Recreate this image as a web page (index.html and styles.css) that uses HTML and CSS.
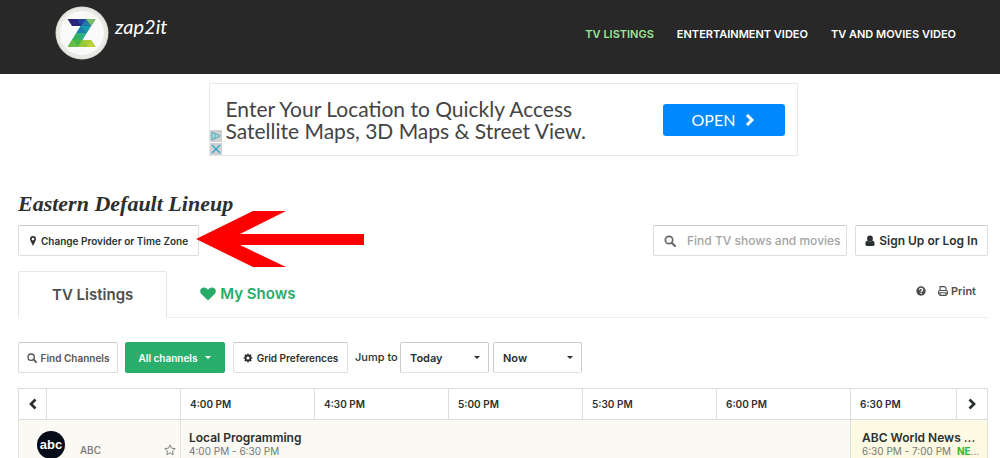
FILE: index.html
```html
<!DOCTYPE html>
<html lang="en">
<head>
<meta charset="utf-8">
<meta name="viewport" content="width=device-width, initial-scale=1">
<title>Zap2it TV Listings</title>
<link rel="stylesheet" href="styles.css">
</head>
<body>
<header class="site-header">
  <a class="brand" href="#">
    <svg class="brand-mark" viewBox="0 0 54 54" aria-hidden="true">
      <clipPath id="z"><path d="M12.500 13h28l-13 21H36l4.500 7h-28l13-21H17z"/></clipPath>
      <circle cx="27" cy="27" r="26.500" fill="#d9d7d1"/>
      <circle cx="27" cy="27" r="25.500" fill="#e9e8e5"/>
      <circle cx="27" cy="27" r="22" fill="#fafafa"/>
      <g clip-path="url(#z)">
        <path d="M12 13h30v7H12z" fill="#28247c"/>
        <path d="M22 13h9l-5 7z" fill="#24459b"/>
        <path d="M31 13l5 7H26z" fill="#2279ad"/>
        <path d="M31 13h10l-5 7z" fill="#76c06a"/>
        <path d="M12 20h30v7H12z" fill="#179aa8"/>
        <path d="M26 20l5 7h-9z" fill="#1f7fae"/>
        <path d="M12 27h30v7H12z" fill="#2fae83"/>
        <path d="M22 27l5 7h-9z" fill="#39b15b"/>
        <path d="M12 34h30v7H12z" fill="#4ab749"/>
        <path d="M18 34l5 7H13z" fill="#6abf45"/>
        <path d="M27 34l5 7h-9z" fill="#94c83d"/>
        <path d="M27 34h15v7H32z" fill="#a9cb38"/>
        <path d="M36 34l5 7h-9z" fill="#bdd234"/>
      </g>
    </svg>
    <span class="brand-name">zap2it</span>
  </a>
  <nav class="main-nav">
    <a class="nav-link nav-link-current" href="#">TV LISTINGS</a>
    <a class="nav-link" href="#">ENTERTAINMENT VIDEO</a>
    <a class="nav-link" href="#">TV AND MOVIES VIDEO</a>
  </nav>
</header>

<main class="page">
  <aside class="ad">
    <p class="ad-text">Enter Your Location to Quickly Access Satellite Maps, 3D Maps &amp; Street View.</p>
    <a class="ad-open" href="#">OPEN
      <svg class="ad-chevron" viewBox="0 0 10 14" aria-hidden="true"><path d="M2 2l5 5-5 5" fill="none" stroke="#fff" stroke-width="3"/></svg>
    </a>
    <div class="ad-badges">
      <button class="ad-badge" aria-label="Ad choices"><svg viewBox="0 0 12 12"><path d="M2 2v8l8-4zM5 4v4" fill="none" stroke="#35b3c8"/></svg></button>
      <button class="ad-badge" aria-label="Close ad"><svg viewBox="0 0 12 12"><path d="M2 2l8 8M10 2l-8 8" fill="none" stroke="#2babc4" stroke-width="1.3"/></svg></button>
    </div>
  </aside>

  <h1 class="lineup">Eastern Default Lineup</h1>

  <div class="toolbar">
    <div class="provider">
      <button class="btn btn-provider">
        <svg class="icon-pin" viewBox="0 0 8 12" aria-hidden="true"><path fill-rule="evenodd" d="M4 1a3 3 0 0 1 3 3c0 1-.3 1.600-.7 2.300L4 11 1.700 6.300C1.300 5.600 1 5 1 4a3 3 0 0 1 3-3zm0 1.700a1.400 1.400 0 1 0 0 2.800 1.400 1.400 0 0 0 0-2.800z" fill="#2b302f"/></svg>
        Change Provider or Time Zone
      </button>
      <svg class="arrow" viewBox="0 0 168 56" aria-hidden="true"><path d="M0 28L57 0H90L44 23H168V34H44L90 56H57z" fill="#fe0000"/></svg>
    </div>
    <div class="account">
      <label class="search">
        <svg class="icon-search" viewBox="0 0 12 12" aria-hidden="true"><circle cx="5" cy="5" r="3.700" fill="none" stroke="currentColor" stroke-width="1.700"/><path d="M7.700 7.700L11 11" stroke="currentColor" stroke-width="2" stroke-linecap="round"/></svg>
        <input class="search-input" type="text" placeholder="Find TV shows and movies" aria-label="Find TV shows and movies">
      </label>
      <button class="btn btn-signin">
        <svg class="icon-user" viewBox="0 0 10 12" aria-hidden="true"><circle cx="5" cy="3.500" r="2.900" fill="currentColor"/><path d="M2.300 5.500C.8 6 .4 7.500.4 9.300.4 10.400 1 11 2 11h6c1 0 1.600-.6 1.600-1.700 0-1.800-.4-3.300-1.900-3.800-1.500 1.400-3.900 1.400-5.400 0z" fill="currentColor"/></svg>
        Sign Up or Log In
      </button>
    </div>
  </div>

  <div class="tabs">
    <a class="tab tab-current" href="#">TV Listings</a>
    <a class="tab tab-shows" href="#">
      <svg class="icon-heart" viewBox="0 0 16 14" aria-hidden="true"><path d="M8 13.500L1.800 7.500C-1.500 4.200.6.500 4 .5c1.900 0 3.100 1.100 4 2.200C8.900 1.600 10.100.5 12 .5c3.400 0 5.500 3.700 2.200 7z" fill="currentColor"/></svg>
      My Shows
    </a>
    <div class="tools">
      <a class="tool" href="#" aria-label="Help"><svg class="icon-tool" viewBox="0 0 10 10"><circle cx="5" cy="5" r="4.700" fill="currentColor"/><path d="M3.400 3.700C3.500 2.700 4.100 2.300 5 2.300c1 0 1.700.6 1.700 1.400C6.700 4.800 5.200 4.700 5.200 6" fill="none" stroke="#fff" stroke-width="1.300"/><path d="M4.500 6.800h1.400V8H4.500z" fill="#fff"/></svg></a>
      <a class="tool" href="#"><svg class="icon-tool" viewBox="0 0 10 10" aria-hidden="true"><path d="M2 5V.6h4.500L8 2v3M2 8H.6V5.500q0-1 1-1h6.800q1 0 1 1V8H8M2 6.700h6v2.700H2z" fill="none" stroke="currentColor" stroke-width="1.100"/></svg>Print</a>
    </div>
  </div>

  <div class="filters">
    <button class="btn btn-find">
      <svg class="icon-find" viewBox="0 0 12 12" aria-hidden="true"><circle cx="5" cy="5" r="3.800" fill="none" stroke="currentColor" stroke-width="1.600"/><path d="M7.700 7.700L11 11" stroke="currentColor" stroke-width="2" stroke-linecap="round"/></svg>
      Find Channels
    </button>
    <button class="btn btn-all">All channels <span class="caret"></span></button>
    <button class="btn btn-prefs">
      <svg class="icon-find" viewBox="0 0 12 12" aria-hidden="true"><circle cx="6" cy="6" r="3" fill="none" stroke="currentColor" stroke-width="2.200"/><path d="M6 .8v2M6 9.200v2M.8 6h2M9.200 6h2M2.300 2.300l1.400 1.400M8.300 8.300l1.400 1.400M9.700 2.300L8.300 3.700M3.700 8.300L2.300 9.700" stroke="currentColor" stroke-width="2"/></svg>
      Grid Preferences
    </button>
    <label class="jump" for="day">Jump to</label>
    <div class="pick"><select class="pick-select" id="day"><option>Today</option></select><span class="caret pick-caret"></span></div>
    <div class="pick"><select class="pick-select" aria-label="Time"><option>Now</option></select><span class="caret pick-caret"></span></div>
  </div>

  <table class="grid">
    <colgroup><col class="col-prev"><col class="col-slot"><col class="col-slot"><col class="col-slot"><col class="col-slot"><col class="col-slot"><col class="col-slot"><col><col class="col-next"></colgroup>
    <thead>
      <tr>
        <th class="step"><button class="step-btn" aria-label="Earlier"><svg class="icon-step" viewBox="0 0 10 12"><path d="M7.500 1.500L3 6l4.500 4.500" fill="none" stroke="currentColor" stroke-width="2.700"/></svg></button></th>
        <th></th>
        <th>4:00 PM</th><th>4:30 PM</th><th>5:00 PM</th><th>5:30 PM</th><th>6:00 PM</th><th>6:30 PM</th>
        <th class="step"><button class="step-btn" aria-label="Later"><svg class="icon-step" viewBox="0 0 10 12"><path d="M2.500 1.500L7 6l-4.500 4.500" fill="none" stroke="currentColor" stroke-width="2.700"/></svg></button></th>
      </tr>
    </thead>
    <tbody>
      <tr>
        <td class="channel" colspan="2">
          <div class="channel-row">
            <svg class="channel-logo" viewBox="0 0 28 28" role="img" aria-label="abc"><circle cx="14" cy="14" r="14" fill="#070d18"/><text class="logo-text" x="14" y="18" text-anchor="middle">abc</text></svg>
            <span class="channel-name">ABC</span>
            <button class="star" aria-label="Add ABC to favorites"><svg viewBox="0 0 12 12"><path d="M6 .9l1.500 3.300 3.700.4-2.700 2.500.7 3.600L6 8.900l-3.200 1.800.7-3.600L.8 4.600l3.700-.4z" fill="none" stroke="#777" stroke-width=".9"/></svg></button>
          </div>
        </td>
        <td class="show" colspan="5">
          <a class="show-title" href="#">Local Programming</a>
          <div class="show-time">4:00 PM - 6:30 PM</div>
        </td>
        <td class="show show-news" colspan="2">
          <a class="show-title" href="#">ABC World News ...</a>
          <div class="show-time">6:30 PM - 7:00 PM <span class="new"><b class="new-tag">NE</b>...</span></div>
        </td>
      </tr>
    </tbody>
  </table>
</main>
</body>
</html>
```
FILE: styles.css
```css
* { box-sizing: border-box; }

body {
  margin: 0;
  background: #fff;
  color: #2b302f;
  font: 600 11px/16px Inter, "Open Sans", sans-serif;
}

a { color: inherit; text-decoration: none; }
button, input, select { margin: 0; font: inherit; color: inherit; }
button { cursor: pointer; }
svg { display: block; flex: none; }

.site-header {
  display: flex;
  align-items: flex-start;
  justify-content: space-between;
  min-height: 74px;
  padding: 6px 44px 0 55px;
  background: #282828;
}
.brand { display: flex; gap: 6px; color: #fff; }
.brand-mark { width: 54px; height: 54px; }
.brand-name { padding-top: 8px; font: italic 400 20px/24px Lato, sans-serif; }
.main-nav { display: flex; gap: 23px; padding-top: 20px; }
.nav-link { color: #fff; }
.nav-link-current { color: #9be69b; }

.page { padding: 9px 12px 0 18px; }

.ad {
  position: relative;
  display: flex;
  align-items: center;
  justify-content: space-between;
  max-width: 589px;
  min-height: 73px;
  margin: 0 auto;
  padding: 0 12px 0 16px;
  border: 1px solid #e8e8e8;
}
.ad-text {
  max-width: 380px;
  margin: 0;
  color: #444;
  font: 400 21px/22px Lato, sans-serif;
}
.ad-open {
  display: flex;
  align-items: center;
  justify-content: center;
  gap: 10px;
  width: 122px;
  height: 32px;
  border-radius: 3px;
  background: #0088ff;
  color: #fff;
  font: 400 16px/32px Lato, sans-serif;
}
.ad-chevron { width: 10px; height: 14px; }
.ad-badges {
  position: absolute;
  left: 0;
  bottom: 0;
  display: grid;
  gap: 1px;
}
.ad-badge { width: 12px; height: 12px; padding: 0; border: 0; background: #d0d0d0; }

.lineup {
  margin: 36px 0 9px;
  font: italic 700 22px/24px "Liberation Serif", serif;
}

.toolbar { display: flex; justify-content: space-between; }
.provider { position: relative; }
.arrow {
  position: absolute;
  left: 178px;
  top: -14px;
  width: 168px;
  height: 56px;
}
.account { display: flex; gap: 8px; }

.btn {
  display: flex;
  align-items: center;
  justify-content: center;
  gap: 4px;
  height: 31px;
  padding: 0;
  border: 1px solid #ddd;
  border-top-color: #c8c8c8;
  border-radius: 2px;
  background: #fff;
  font-size: 10px;
  white-space: nowrap;
}
.btn-provider { width: 181px; }
.btn-signin { width: 133px; font-size: 12px; }
.icon-pin { width: 8px; height: 12px; }
.icon-user { width: 10px; height: 12px; }

.search {
  display: flex;
  align-items: center;
  gap: 11px;
  width: 194px;
  height: 31px;
  padding: 0 5px 0 10px;
  border: 1px solid #ddd;
  border-top-color: #c8c8c8;
  border-radius: 2px;
  color: #666;
}
.icon-search { width: 12px; height: 12px; }
.search-input {
  flex: 1;
  min-width: 0;
  padding: 0;
  border: 0;
  outline: 0;
  background: none;
  font-size: 12px;
  font-weight: 500;
}
.search-input::placeholder { color: #a4a4a4; opacity: 1; }

.tabs {
  display: flex;
  height: 47px;
  margin-top: 15px;
  border-bottom: 1px solid #ececec;
  color: #4c4f4f;
}
.tab {
  display: flex;
  align-items: center;
  gap: 4px;
  padding: 0 33px;
  font-size: 15px;
}
.tab-current {
  height: 47px;
  border: 1px solid #e6e6e6;
  border-bottom-color: #fff;
  border-radius: 2px 2px 0 0;
}
.tab-shows { color: #27ab68; }
.icon-heart { width: 16px; height: 14px; }
.tools {
  display: flex;
  align-items: flex-start;
  gap: 12px;
  margin-left: auto;
  padding: 12px 12px 0 0;
}
.tool { display: flex; align-items: center; gap: 3px; min-height: 16px; }
.icon-tool { width: 10px; height: 10px; }

.filters { display: flex; margin: 24px 0 15px; }
.icon-find { width: 10px; height: 10px; }
.btn-find { width: 100px; margin-right: 7px; color: #555; }
.btn-all {
  gap: 8px;
  width: 100px;
  margin-right: 8px;
  border-color: #27ab68;
  background: #29ae6c;
  color: #fff;
}
.btn-prefs { width: 115px; }
.jump {
  width: 52px;
  padding: 7px 0 0 7px;
  font-weight: 500;
  white-space: nowrap;
}
.caret {
  border: 3px solid transparent;
  border-top-color: currentColor;
  border-bottom-width: 0;
}
.pick { position: relative; width: 89px; }
.pick + .pick { margin-left: 4px; }
.pick-select {
  width: 100%;
  height: 31px;
  padding: 0 9px;
  border: 1px solid #ccc;
  border-bottom-color: #e2e2e2;
  border-radius: 2px;
  background: #fff;
  appearance: none;
}
.pick-caret { position: absolute; top: 14px; right: 9px; pointer-events: none; }

.grid {
  width: 100%;
  border-collapse: collapse;
  table-layout: fixed;
}
.col-prev { width: 28px; }
.col-slot { width: 134px; }
.col-next { width: 31px; }
.grid th {
  height: 31px;
  padding: 0 9px;
  border: 1px solid #ddd;
  font-size: 10px;
  font-weight: 600;
  text-align: left;
}
.grid .step { padding: 0; }
.step-btn {
  display: grid;
  place-items: center;
  width: 100%;
  padding: 0;
  border: 0;
  background: none;
}
.icon-step { width: 10px; height: 12px; }
.grid td {
  height: 39px;
  padding: 0;
  border: 1px solid #e2e2dc;
  border-bottom: 0;
  background: #faf9f4;
  vertical-align: top;
}
.channel-row { display: flex; align-items: flex-start; padding: 11px 4px 0 18px; }
.channel-logo { width: 28px; height: 28px; }
.logo-text { fill: #fff; font: 700 13px "Liberation Sans", sans-serif; }
.channel-name { padding: 11px 0 0 15px; color: #777; font-size: 10px; font-weight: 500; }
.star {
  width: 12px;
  height: 12px;
  margin: 13px 0 0 auto;
  padding: 0;
  border: 0;
  background: none;
}
.grid .show { padding: 10px 8px 0; }
.grid .show-news { padding: 10px 4px 0 11px; background: #fcfae3; }
.show-title, .show-time { display: block; white-space: nowrap; }
.show-title { font-size: 12px; line-height: 15px; }
.show-time { color: #777; font-size: 10px; font-weight: 400; line-height: 13px; }
.new { margin-left: 3px; }
.new-tag { color: #35b52f; font-weight: 700; }
```
